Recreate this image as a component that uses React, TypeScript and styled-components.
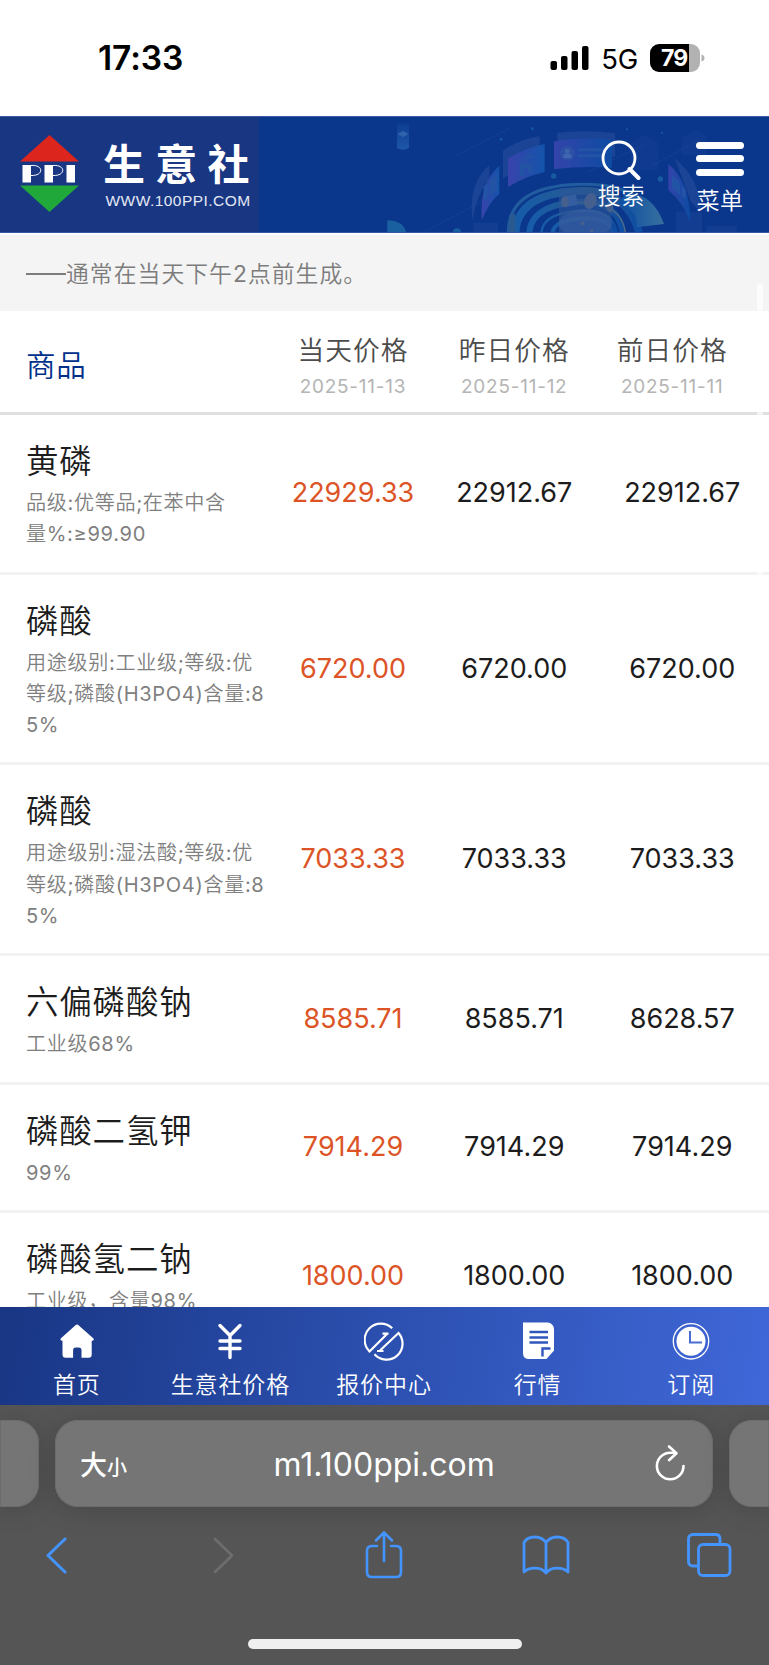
import React from "react";
import styled, { createGlobalStyle } from "styled-components";

const Global = createGlobalStyle`
  * { box-sizing: border-box; }
  body { margin: 0; background: #fff; font-family: Inter, "Noto Sans CJK SC DemiLight", "Noto Sans CJK SC", sans-serif; }
`;

const Screen = styled.div`
  width: 769px;
  height: 1665px;
  overflow: hidden;
  display: flex;
  flex-direction: column;
  position: relative;
  background: #fff;
`;

const StatusBar = styled.div`
  height: 116px;
  flex: none;
  display: flex;
  align-items: center;
  padding: 0 64px 0 98px;
`;
const Clock = styled.div`
  font-size: 33.5px;
  font-weight: 600;
  letter-spacing: -0.1px;
  color: #000;
  margin: -1px auto 0 0;
`;
const Network = styled.div`
  font-size: 27.5px;
  line-height: 30px;
  letter-spacing: -0.3px;
  margin: 1px 12px 0 12px;
`;
const Battery = styled.div`
  width: 50px;
  height: 28px;
  border-radius: 9px;
  background: linear-gradient(90deg, #000 39px, #b2b2b2 39px);
  color: #fff;
  font-size: 23px;
  font-weight: 700;
  line-height: 28px;
  padding-left: 11px;
  margin-top: -1px;
  letter-spacing: -0.8px;
`;

const Banner = styled.header`
  height: 117px;
  flex: none;
  display: flex;
  position: relative;
  background: #0a378c;
  border-top: 1px solid #3e5ca5;
  border-bottom: 1px solid #3458a4;
`;
const Scene = styled.svg`
  position: absolute;
  left: 380px;
  top: 0;
  opacity: 0.72;
`;
const Brand = styled.div`
  width: 259px;
  background: #193683;
  display: flex;
  padding-left: 20px;
`;
const BrandMark = styled.svg`
  margin-top: 17px;
  flex: none;
`;
const BrandText = styled.div`
  margin-left: 23px;
  color: #fff;
  white-space: nowrap;
`;
const BrandName = styled.div`
  font-family: "Noto Sans CJK SC", sans-serif;
  font-weight: 700;
  font-size: 42px;
  line-height: 48px;
  letter-spacing: 10.3px;
  margin-top: 21px;
`;
const BrandUrl = styled.div`
  font-family: "Liberation Sans", sans-serif;
  font-size: 15.5px;
  line-height: 18px;
  letter-spacing: 0.46px;
  color: #e3e8f4;
  margin: 6px 0 0 2.5px;
`;
const BannerAction = styled.div<{ $right: number; $top: number }>`
  position: absolute;
  right: ${(p) => p.$right}px;
  top: ${(p) => p.$top}px;
  display: flex;
  flex-direction: column;
  align-items: center;
  color: #fff;
  font-size: 23px;
  line-height: 30px;
  letter-spacing: 0.6px;
`;
const MenuLines = styled.div`
  width: 48px;
  height: 34px;
  display: flex;
  flex-direction: column;
  justify-content: space-between;
  margin-bottom: 10px;
  i {
    height: 7px;
    border-radius: 4px;
    background: #fff;
  }
`;

const Notice = styled.div`
  height: 76px;
  flex: none;
  margin-top: 2px;
  padding-left: 26px;
  background: #f4f4f4;
  color: #7c7c7c;
  font-size: 22.8px;
  line-height: 78px;
  letter-spacing: 1.05px;
`;
const Dash = styled.span`
  display: inline-block;
  width: 40px;
  height: 2px;
  background: #7c7c7c;
  vertical-align: 7px;
`;
const ScrollThumb = styled.div`
  position: absolute;
  right: 6px;
  top: 283px;
  width: 6px;
  height: 330px;
  border-radius: 3px;
  background: rgba(255, 255, 255, 0.6);
`;

const Columns = styled.div`
  display: grid;
  grid-template-columns: 273px 160px 162.5px 173.5px;
  align-items: center;
`;
const TableHead = styled(Columns)`
  height: 104px;
  flex: none;
  border-bottom: 3px solid #e0e0e0;
`;
const HeadName = styled.div`
  padding: 3px 0 0 26px;
  color: #00308a;
  font-size: 29.5px;
  letter-spacing: 0.7px;
`;
const HeadDay = styled.div<{ $shift?: number }>`
  text-align: center;
  padding-right: ${(p) => p.$shift || 0}px;
  color: #4c4c4c;
  font-size: 26.7px;
  line-height: 38px;
  letter-spacing: 1.1px;
  padding-top: 12px;
`;
const HeadDate = styled.div`
  color: #b4b4b4;
  font-size: 18.9px;
  line-height: 35px;
  letter-spacing: 0.8px;
`;
const Row = styled(Columns)`
  flex: none;
  border-bottom: 3px solid #f2f2f2;
`;
const Product = styled.div`
  padding: 27px 0 21px 26px;
  white-space: pre;
`;
const ProductName = styled.div`
  color: #1c1c1c;
  font-size: 32.5px;
  line-height: 40px;
  letter-spacing: 0.8px;
  margin-bottom: 6px;
`;
const ProductSpec = styled.div`
  color: #808080;
  font-size: 20.1px;
  line-height: 31.3px;
  letter-spacing: 0.65px;
`;
const Price = styled.div<{ $today?: boolean }>`
  text-align: center;
  color: ${(p) => (p.$today ? "#dc5426" : "#1c1c1c")};
  font-size: 27px;
  line-height: 32px;
`;

const BottomDock = styled.div`
  position: absolute;
  left: 0;
  right: 0;
  bottom: 0;
`;
const TabBar = styled.nav`
  height: 98px;
  display: grid;
  grid-template-columns: repeat(5, 1fr);
  padding-right: 1px;
  background: linear-gradient(100deg, #193684 0%, #2c50b0 50%, #4067d8 100%);
`;
const Tab = styled.div`
  display: flex;
  flex-direction: column;
  align-items: center;
  padding-top: 14px;
  color: #fff;
  font-size: 23px;
  line-height: 32px;
  letter-spacing: 0.9px;
  white-space: nowrap;
  svg {
    margin-bottom: 8px;
  }
`;

const BrowserBar = styled.div`
  height: 260px;
  background: #555;
  overflow: hidden;
`;
const AddressRow = styled.div`
  display: grid;
  grid-template-columns: 39px 658px 40px;
  gap: 16px;
  padding-top: 15px;
`;
const Pill = styled.div<{ $side?: "left" | "right" }>`
  height: 87px;
  border-radius: ${(p) =>
    p.$side === "left" ? "0 23px 23px 0" : p.$side === "right" ? "23px 0 0 23px" : "23px"};
  background: #757575;
  box-shadow: 0 3px 26px rgba(0, 0, 0, 0.17), inset 0 0 0 1px #6c6c6c;
  display: flex;
  align-items: center;
  color: #fff;
`;
const TextSize = styled.div`
  width: 218.5px;
  padding-left: 25px;
  font-family: "Noto Sans CJK SC", sans-serif;
  font-size: 27px;
  font-weight: 500;
  span {
    font-size: 20px;
  }
`;
const Host = styled.div`
  width: 380.5px;
  font-size: 32px;
  padding-top: 2px;
`;
const ToolRow = styled.div`
  display: grid;
  grid-template-columns: repeat(5, 1fr);
  justify-items: center;
  align-items: center;
  height: 50px;
  margin: 23px -21px 0 -25px;
`;
const HomeIndicator = styled.div`
  width: 274px;
  height: 10px;
  border-radius: 5px;
  background: #efefef;
  margin: 59px auto 0;
`;

const rows = [
  ["黄磷", "品级:优等品;在苯中含\n量%:≥99.90", "22929.33", "22912.67", "22912.67"],
  ["磷酸", "用途级别:工业级;等级:优\n等级;磷酸(H3PO4)含量:8\n5%", "6720.00", "6720.00", "6720.00"],
  ["磷酸", "用途级别:湿法酸;等级:优\n等级;磷酸(H3PO4)含量:8\n5%", "7033.33", "7033.33", "7033.33"],
  ["六偏磷酸钠", "工业级68%", "8585.71", "8585.71", "8628.57"],
  ["磷酸二氢钾", "99%", "7914.29", "7914.29", "7914.29"],
  ["磷酸氢二钠", "工业级，含量98%", "1800.00", "1800.00", "1800.00"],
];

const HomeIcon = () => (
  <svg width="40" height="40" viewBox="0 0 40 40">
    <path
      d="M18.200 4.400q1.800-1.600 3.600 0L36.500 17.500q1 1.700-1 2.200h-.8v14q0 3-3 3h-7.200v-7.500q0-2.700-2.700-2.700h-3q-2.700 0-2.700 2.700v7.500H8.500q-3 0-3-3v-14h-.8q-2-.5-1-2.200z"
      fill="#fff"
    />
  </svg>
);
const YuanIcon = () => (
  <svg width="40" height="40" viewBox="0 0 40 40" fill="none" stroke="#fff" strokeWidth="3.400" strokeLinecap="round">
    <path d="M10 4.500l10 10 10-10M20 14.500V36.500M10 20h20M10 27.500h20" />
  </svg>
);
const QuoteIcon = () => (
  <svg width="40" height="40" viewBox="0 0 40 40" fill="none" stroke="#fff" strokeWidth="2.200">
    <path d="M28.200 7.300A15.800 15.800 0 0 0 5.500 30.500L23 13M18.500 12.700h6" />
    <path d="M10.500 33.300A15.800 15.800 0 0 0 34.500 12L16 29.500M13 30h6.500" />
  </svg>
);
const NewsIcon = () => (
  <svg width="40" height="40" viewBox="0 0 40 40">
    <path d="M5 1.500h25q5.500 1 6 6.500v21.500L28.500 38H11q-6 0-6-6z" fill="#fff" />
    <path d="M11.500 11h18.500M11.500 16.500h18.500M11.500 21.500h18.500M32.500 27.500h-8v8" fill="none" stroke="#3157bd" strokeWidth="2.400" />
  </svg>
);
const ClockIcon = () => (
  <svg width="40" height="40" viewBox="0 0 40 40" fill="none">
    <circle cx="20" cy="20.300" r="17.700" stroke="#fff" strokeWidth="1.300" />
    <circle cx="20" cy="20.300" r="14.500" fill="#fff" />
    <path d="M19 10v11.500h12" stroke="#4a6ed0" strokeWidth="2" />
  </svg>
);

const tabs: [string, React.FC][] = [
  ["首页", HomeIcon],
  ["生意社价格", YuanIcon],
  ["报价中心", QuoteIcon],
  ["行情", NewsIcon],
  ["订阅", ClockIcon],
];

const BannerScene = () => (
  <Scene width="389" height="115" viewBox="0 21 1167 345">
    <defs>
      <linearGradient id="panel" x1="0" x2="1">
        <stop offset="0" stopColor="#4b48b8" />
        <stop offset="1" stopColor="#1860b8" />
      </linearGradient>
      <linearGradient id="panelR" x1="0" x2="1">
        <stop offset="0" stopColor="#4449b6" />
        <stop offset="1" stopColor="#0e55ac" />
      </linearGradient>
      <linearGradient id="fan" x1="0" x2="1">
        <stop offset="0" stopColor="#0c58b0" />
        <stop offset="1" stopColor="#4a86a4" />
      </linearGradient>
      <linearGradient id="ring" x1="0" x2="1">
        <stop offset="0" stopColor="#1b6bb5" />
        <stop offset="0.600" stopColor="#35678d" />
        <stop offset="1" stopColor="#1057ac" />
      </linearGradient>
      <linearGradient id="beam" x1="0" x2="0" y1="0" y2="1">
        <stop offset="0" stopColor="#0d3f94" />
        <stop offset="1" stopColor="#2864b2" />
      </linearGradient>
    </defs>
    <g stroke="#29559a" strokeWidth="2" opacity="0.700">
      <path d="M230 137L392 52M135 364L305 275M620 188L790 105M815 167L960 90" />
    </g>
    <path d="M51 38h36v76q-18 10-36 0z" fill="url(#beam)" />
    <path d="M52 72l17-9 17 9-17 9z" fill="#3f74b9" />
    <path d="M22 331q46 0 57 36H22z" fill="#1f71aa" />
    <g fill="#1d6aa9">
      <circle cx="521" cy="198" r="8" /><circle cx="841" cy="207" r="8" />
      <circle cx="457" cy="56" r="4" /><circle cx="363" cy="88" r="4" />
      <circle cx="846" cy="68" r="3" /><circle cx="741" cy="58" r="3" /><circle cx="231" cy="367" r="12" />
    </g>
    <g fill="#24499a">
      <path d="M328 166v40q-40 50-50 125-15-110 50-165zM369 122q50-34 110-44v44l-110 85zM532 68q85-10 173 2v70H532zM885 146q75 60 78 160l-30-30z" />
      <path d="M750 98l43-22 42 22v82h-85zM905 82l43-22 30 16v60h-73z" opacity="0.350" />
      <path d="M280 338h75v30h-75zM888 305h78v62h-78zM980 348h90v20h-90z" opacity="0.500" />
    </g>
    <path d="M358 167v84q-35 30-52 80-10-110 52-164z" fill="url(#panel)" />
    <path d="M384 146q50-32 110-44v84q-60 14-110 45z" fill="url(#panel)" />
    <path d="M522 94q80-14 174-4v83q-90-6-174 5z" fill="url(#panelR)" />
    <path d="M865 162q66 55 66 176-20-60-66-98z" fill="url(#panelR)" />
    <g fill="#2d5fae">
      <path d="M420 160h38v28l-13 4v-16h-13v20l-12 4zM422 160q2-22 35-24v8q-25 2-28 14z" />
      <circle cx="562" cy="130" r="22" fill="#3c5bb0" />
      <path d="M594 115h80v9h-80zM594 133h80v9h-80zM327 214l24-22v48l-24 18zM311 230l12-12v45l-12 14zM876 195l24 22v38l-24-22zM905 227l12 12v28l-12-10z" />
    </g>
    <g fill="#5479c0"><circle cx="562" cy="123" r="7" /><path d="M549 144q0-14 13-14t13 14z" /></g>
    <g fill="none" stroke="url(#ring)">
      <path d="M385 367q0-144 230-144 145 0 180 75" strokeWidth="9" stroke="#2a6ba5" />
      <path d="M407 367q5-120 205-125 130 0 165 125" strokeWidth="23" />
      <path d="M448 367q8-88 165-92 100 0 115 92" strokeWidth="18" />
      <path d="M484 367q7-62 130-66 85 0 96 66" strokeWidth="7" />
      <path d="M518 367q5-38 98-42 74 0 85 42" strokeWidth="12" />
      <path d="M590 277q135-3 146 90" stroke="#6f8085" strokeWidth="4" />
    </g>
    <path d="M735 250q82-4 117 92l-82 10q5-55-55-68z" fill="url(#fan)" />
    <path d="M537 235h158v132H537z" fill="#38639f" opacity="0.600" />
    <ellipse cx="616" cy="340" rx="80" ry="42" fill="#4b70ac" opacity="0.600" />
    <path d="M550 260l38-7 5 32-48 7z" fill="#456daa" />
    <g fill="#5d7090">
      <ellipse cx="555" cy="275" rx="12" ry="17" /><ellipse cx="631" cy="273" rx="18" ry="25" transform="rotate(20 631 273)" />
      <ellipse cx="690" cy="290" rx="10" ry="16" /><circle cx="608" cy="340" r="6" /><circle cx="635" cy="363" r="5" />
    </g>
    <path d="M388 315l18-5v57h-20z" fill="#346792" />
  </Scene>
);

export default function App() {
  return (
    <>
      <Global />
      <Screen>
        <StatusBar>
          <Clock>17:33</Clock>
          <svg width="39" height="26" viewBox="0 0 39 26">
            <rect x="0.500" y="16" width="6.500" height="9" rx="2" />
            <rect x="11" y="11" width="6.500" height="14" rx="2" />
            <rect x="21.500" y="6" width="6.500" height="19" rx="2" />
            <rect x="32" y="1" width="6.500" height="24" rx="2" />
          </svg>
          <Network>5G</Network>
          <Battery>79</Battery>
          <svg width="5" height="10">
            <path d="M1.500 1.500q3 1 3 3.500t-3 3.500z" fill="#b2b2b2" />
          </svg>
        </StatusBar>
        <Banner>
          <Brand>
            <BrandMark width="60" height="80" viewBox="0 0 60 80">
              <path d="M29.500 1L59 27.500H0z" fill="#dc251c" />
              <path d="M0 51.500h59L29.500 78z" fill="#20a83a" />
              <path d="M2.500 31h8.500v17.500h-8.500zM24.500 31h8.500v17.500h-8.500zM46.500 31h8.500v17.500h-8.500z" fill="#fff" />
              <path d="M11 31.500c13-1 13 10.500 0 10M33 31.500c13-1 13 10.500 0 10" fill="none" stroke="#fff" strokeWidth="1" />
            </BrandMark>
            <BrandText>
              <BrandName>生意社</BrandName>
              <BrandUrl>WWW.100PPI.COM</BrandUrl>
            </BrandText>
          </Brand>
          <BannerScene />
          <BannerAction $right={124} $top={23}>
            <svg width="40" height="41" viewBox="0 0 40 41" fill="none" stroke="#fff" strokeWidth="2.800">
              <circle cx="18" cy="18" r="16" />
              <path d="M28.500 29l9 9" strokeWidth="4" strokeLinecap="round" />
            </svg>
            搜索
          </BannerAction>
          <BannerAction $right={25} $top={24.5}>
            <MenuLines><i /><i /><i /></MenuLines>
            菜单
          </BannerAction>
        </Banner>
        <Notice>
          <Dash />
          通常在当天下午2点前生成。
        </Notice>
        <TableHead>
          <HeadName>商品</HeadName>
          <HeadDay>当天价格<HeadDate>2025-11-13</HeadDate></HeadDay>
          <HeadDay>昨日价格<HeadDate>2025-11-12</HeadDate></HeadDay>
          <HeadDay $shift={20}>前日价格<HeadDate>2025-11-11</HeadDate></HeadDay>
        </TableHead>
        {rows.map((r, i) => (
          <Row key={i}>
            <Product>
              <ProductName>{r[0]}</ProductName>
              <ProductSpec>{r[1]}</ProductSpec>
            </Product>
            <Price $today>{r[2]}</Price>
            <Price>{r[3]}</Price>
            <Price>{r[4]}</Price>
          </Row>
        ))}
        <ScrollThumb />
        <BottomDock>
          <TabBar>
            {tabs.map(([label, Icon]) => (
              <Tab key={label}>
                <Icon />
                {label}
              </Tab>
            ))}
          </TabBar>
          <BrowserBar>
            <AddressRow>
              <Pill $side="left" />
              <Pill>
                <TextSize>大<span>小</span></TextSize>
                <Host>m1.100ppi.com</Host>
                <svg width="34" height="40" viewBox="0.500 0.500 34 40" fill="none" stroke="#fff" strokeWidth="2.600" strokeLinecap="round" strokeLinejoin="round">
                  <path d="M30 22.500A13.300 13.300 0 1 1 16.700 9.200H22M15.500 3l7.500 6.700-7.500 7" />
                </svg>
              </Pill>
              <Pill $side="right" />
            </AddressRow>
            <ToolRow>
              <svg width="25" height="38" viewBox="0 0 25 38" fill="none" stroke="#4494ff" strokeWidth="3" strokeLinecap="round" strokeLinejoin="round">
                <path d="M21 3L4 19.500 21 36" />
              </svg>
              <svg width="25" height="38" viewBox="-4 0 25 38" fill="none" stroke="#6e6e6e" strokeWidth="2.600" strokeLinecap="round" strokeLinejoin="round" overflow="visible">
                <path d="M4 3l17 16.500L4 36" />
              </svg>
              <svg width="40" height="50" viewBox="-1 0 40 50" fill="none" stroke="#4494ff" strokeWidth="2.600" strokeLinecap="round" strokeLinejoin="round">
                <path d="M13 16H8q-5 0-5 5v21q0 5 5 5h24q5 0 5-5V21q0-5-5-5h-5M20 31V3M12 10.500L20 2.500l8 8" />
              </svg>
              <svg width="50" height="42" viewBox="0 0 50 42" fill="none" stroke="#4494ff" strokeWidth="2.800" strokeLinejoin="round">
                <path d="M25 8.500Q21 3 14 3 6 3 3 8.500V38q4-3.800 11-3.800T25 39q4-4.800 11-4.800T47 38V8.500Q44 3 36 3q-7 0-11 5.500V39" />
              </svg>
              <svg width="46" height="46" viewBox="0 0 46 46" fill="none" stroke="#4494ff" strokeWidth="2.800">
                <path d="M12.500 34H7q-4.500 0-4.500-4.500V7Q2.500 2.500 7 2.500h22.500Q34 2.500 34 7v5.500" />
                <rect x="12.500" y="12.500" width="31.500" height="31" rx="4.500" />
              </svg>
            </ToolRow>
            <HomeIndicator />
          </BrowserBar>
        </BottomDock>
      </Screen>
    </>
  );
}
